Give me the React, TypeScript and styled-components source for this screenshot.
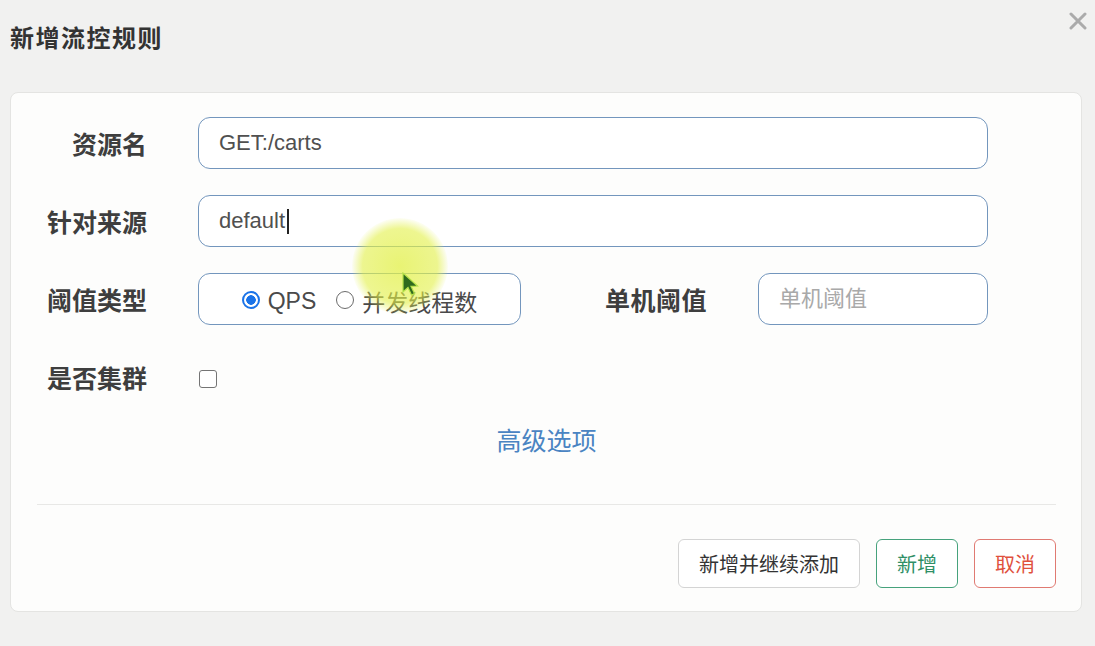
import styled, { createGlobalStyle } from "styled-components";

const GlobalStyle = createGlobalStyle`
  html, body {
    margin: 0;
    padding: 0;
    background: #f1f1f0;
    font-family: "Liberation Sans", "Noto Sans CJK SC", sans-serif;
  }
`;

const App = () => {
  return (
    <>
      <GlobalStyle />
      <Page>
        <Header>
          <Title>新增流控规则</Title>
          <CloseButton aria-label="close">
            <svg width="18" height="18" viewBox="0 0 18 18">
              <path d="M2 2 L16 16 M16 2 L2 16" stroke="#ababab" strokeWidth="3" strokeLinecap="round" />
            </svg>
          </CloseButton>
        </Header>
        <Panel>
          <Form>
            <Row>
              <Label>资源名</Label>
              <TextInput defaultValue="GET:/carts" />
            </Row>
            <Row>
              <Label>针对来源</Label>
              <InputWrap>
                <TextInput defaultValue="default" />
                <Caret />
              </InputWrap>
            </Row>
            <Row>
              <Label>阈值类型</Label>
              <RadioBox>
                <RadioItem>
                  <Radio type="radio" name="grade" defaultChecked />
                  QPS
                </RadioItem>
                <RadioItem>
                  <Radio type="radio" name="grade" />
                  并发线程数
                </RadioItem>
              </RadioBox>
              <Label $inline>单机阈值</Label>
              <TextInput placeholder="单机阈值" />
            </Row>
            <Row>
              <Label>是否集群</Label>
              <Check type="checkbox" />
            </Row>
            <AdvancedLink>高级选项</AdvancedLink>
          </Form>
          <Divider />
          <Footer>
            <Button>新增并继续添加</Button>
            <Button $variant="success">新增</Button>
            <Button $variant="danger">取消</Button>
          </Footer>
        </Panel>
        <Highlight />
        <Pointer width="20" height="26" viewBox="0 0 20 26">
          <path d="M2 1 L2 20 L7 15.5 L10.5 23 L13.5 21.6 L10 14.3 L16.5 14 Z" fill="#2f6a1e" stroke="#b6e14a" strokeWidth="1.2" />
        </Pointer>
      </Page>
    </>
  );
};

const Page = styled.div`
  position: relative;
  width: 1095px;
  height: 646px;
  overflow: hidden;
`;

const Header = styled.div`
  position: relative;
  height: 92px;
  padding-left: 10px;
  box-sizing: border-box;
`;

const Title = styled.h1`
  margin: 0;
  padding-top: 20px;
  font-size: 24px;
  line-height: 38px;
  font-weight: 700;
  color: #333;
  letter-spacing: 1.5px;
`;

const CloseButton = styled.div`
  position: absolute;
  top: 12px;
  right: 8px;
  display: flex;
`;

const Panel = styled.div`
  margin: 0 13px 0 10px;
  background: #fdfdfc;
  border: 1px solid #e4e4e2;
  border-radius: 8px;
  padding: 24px 25px 23px 26px;
  box-sizing: border-box;
  height: 520px;
`;

const Form = styled.div`
  display: flex;
  flex-direction: column;
  gap: 26px;
  padding-right: 68px;
`;

const Row = styled.div`
  display: flex;
  align-items: center;
  height: 52px;
`;

const Label = styled.div<{ $inline?: boolean }>`
  flex: 0 0 auto;
  width: ${(p) => (p.$inline ? "104px" : "110px")};
  margin-left: ${(p) => (p.$inline ? "84px" : "0")};
  margin-right: ${(p) => (p.$inline ? "49px" : "51px")};
  text-align: ${(p) => (p.$inline ? "left" : "right")};
  font-size: 25px;
  font-weight: 700;
  color: #3e3e3e;
  white-space: nowrap;
  letter-spacing: ${(p) => (p.$inline ? "0.5px" : "0")};
`;

const InputWrap = styled.div`
  position: relative;
  flex: 1;
  display: flex;
  height: 100%;
`;

const TextInput = styled.input`
  flex: 1;
  min-width: 0;
  height: 52px;
  box-sizing: border-box;
  border: 1.5px solid #7396bd;
  border-radius: 12px;
  background: #fff;
  padding: 0 20px;
  font-family: "Liberation Sans", "Noto Sans CJK SC", sans-serif;
  font-size: 22px;
  color: #505050;
  outline: none;

  &::placeholder {
    color: #a9a9a9;
  }
`;

const Caret = styled.span`
  position: absolute;
  left: 89px;
  top: 14px;
  width: 2px;
  height: 25px;
  background: #222;
`;

const RadioBox = styled.div`
  flex: 0 0 323px;
  height: 52px;
  box-sizing: border-box;
  border: 1.5px solid #7396bd;
  border-radius: 12px;
  background: #fff;
  display: flex;
  align-items: center;
  justify-content: center;
  gap: 20px;
  padding-top: 4px;
`;

const RadioItem = styled.label`
  display: flex;
  align-items: center;
  gap: 8px;
  font-size: 23px;
  color: #4a4a4a;
`;

const Radio = styled.input`
  appearance: none;
  margin: 0 0 3px 0;
  width: 18px;
  height: 18px;
  box-sizing: border-box;
  border-radius: 50%;
  border: 1.5px solid #6b6b6b;
  background: #fff;

  &:checked {
    border: 2px solid #1a73e8;
    background: radial-gradient(circle, #1a73e8 0 4.5px, #fff 5px);
  }
`;

const Check = styled.input`
  appearance: none;
  margin: 4px 0 0 1px;
  width: 18px;
  height: 18px;
  box-sizing: border-box;
  border: 1.5px solid #747474;
  border-radius: 3px;
  background: #fff;
`;

const AdvancedLink = styled.div`
  margin-top: -6px;
  text-align: center;
  padding-left: 68px;
  font-size: 25px;
  line-height: 36px;
  color: #4a84c2;
`;

const Divider = styled.div`
  height: 1px;
  background: #e8e8e6;
  margin-top: 45px;
`;

const Footer = styled.div`
  display: flex;
  justify-content: flex-end;
  gap: 16px;
  margin-top: 34px;
`;

const buttonColors = {
  default: { border: "#d4d4d4", color: "#333" },
  success: { border: "#46a27c", color: "#2f8f66" },
  danger: { border: "#e07a72", color: "#e0503c" },
};

const Button = styled.button<{ $variant?: "success" | "danger" }>`
  height: 49px;
  padding: 0 20px;
  background: #fff;
  border: 1.5px solid ${(p) => buttonColors[p.$variant ?? "default"].border};
  color: ${(p) => buttonColors[p.$variant ?? "default"].color};
  border-radius: 6px;
  font-family: "Liberation Sans", "Noto Sans CJK SC", sans-serif;
  font-size: 20px;
  cursor: pointer;
`;

const Highlight = styled.div`
  position: absolute;
  left: 352px;
  top: 218px;
  width: 96px;
  height: 96px;
  border-radius: 50%;
  background: radial-gradient(circle, rgba(226, 240, 70, 0.75) 0%, rgba(226, 240, 70, 0.6) 55%, rgba(226, 240, 70, 0) 72%);
  pointer-events: none;
`;

const Pointer = styled.svg`
  position: absolute;
  left: 401px;
  top: 272px;
  pointer-events: none;
`;

export default App;
